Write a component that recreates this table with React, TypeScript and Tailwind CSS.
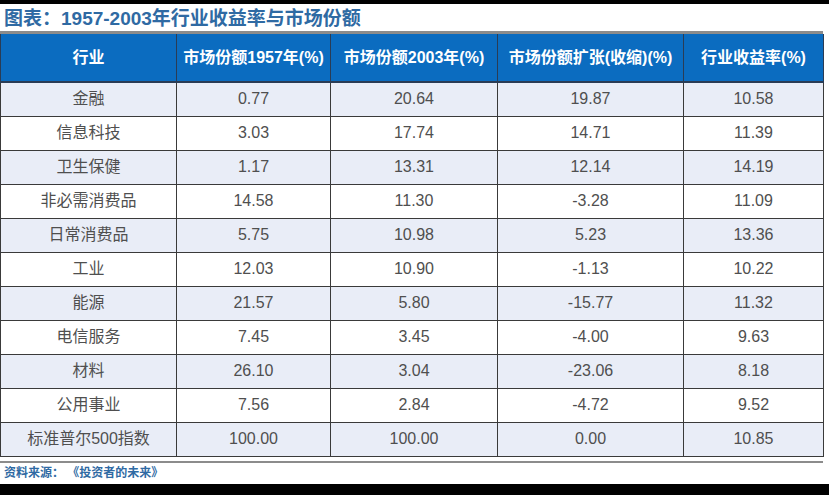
const rows: [string, string, string, string, string][] = [
  ["金融", "0.77", "20.64", "19.87", "10.58"],
  ["信息科技", "3.03", "17.74", "14.71", "11.39"],
  ["卫生保健", "1.17", "13.31", "12.14", "14.19"],
  ["非必需消费品", "14.58", "11.30", "-3.28", "11.09"],
  ["日常消费品", "5.75", "10.98", "5.23", "13.36"],
  ["工业", "12.03", "10.90", "-1.13", "10.22"],
  ["能源", "21.57", "5.80", "-15.77", "11.32"],
  ["电信服务", "7.45", "3.45", "-4.00", "9.63"],
  ["材料", "26.10", "3.04", "-23.06", "8.18"],
  ["公用事业", "7.56", "2.84", "-4.72", "9.52"],
  ["标准普尔500指数", "100.00", "100.00", "0.00", "10.85"],
];

const headers = ["行业", "市场份额1957年(%)", "市场份额2003年(%)", "市场份额扩张(收缩)(%)", "行业收益率(%)"];
const widths = ["w-[176px]", "w-[154px]", "w-[167px]", "w-[186px]", "w-[140px]"];

export default function App() {
  return (
    <div className="w-[829px] h-[495px] bg-white flex flex-col overflow-hidden font-['Liberation_Sans','Noto_Sans_CJK_SC',sans-serif]">
      <div className="h-[4px] bg-black" />
      <div className="h-[27px] flex items-center pl-[4px] pt-[2px] text-[19px] font-bold text-[#2f6aa3] leading-none">
        图表：1957-2003年行业收益率与市场份额
      </div>
      <div className="w-[823px] border-t-[3px] border-[#8c8c8c]">
        <table className="w-[823px] border-collapse table-fixed">
          <thead>
            <tr className="h-[48px] bg-[#0b6cc0]">
              {headers.map((h, i) => (
                <th
                  key={h}
                  className={`${widths[i]} border-x border-b-2 border-[#2a3c55] text-white text-[16px] font-bold text-center`}
                >
                  {h}
                </th>
              ))}
            </tr>
          </thead>
          <tbody>
            {rows.map((r, idx) => (
              <tr key={r[0]} className={`h-[34px] ${idx % 2 === 0 ? "bg-[#e9edf7]" : "bg-white"}`}>
                {r.map((c, i) => (
                  <td
                    key={i}
                    className="border border-[#3a3a3a] text-[16px] text-[#4f4f4f] text-center"
                  >
                    {c}
                  </td>
                ))}
              </tr>
            ))}
          </tbody>
        </table>
      </div>
      <div className="mt-[4px] w-[823px] border-t-2 border-[#8c8c8c]" />
      <div className="flex-1 flex items-center pl-[4px] text-[12px] font-bold text-[#2f6aa3] whitespace-pre">
        资料来源： 《投资者的未来》
      </div>
      <div className="h-[11px] bg-black" />
    </div>
  );
}
